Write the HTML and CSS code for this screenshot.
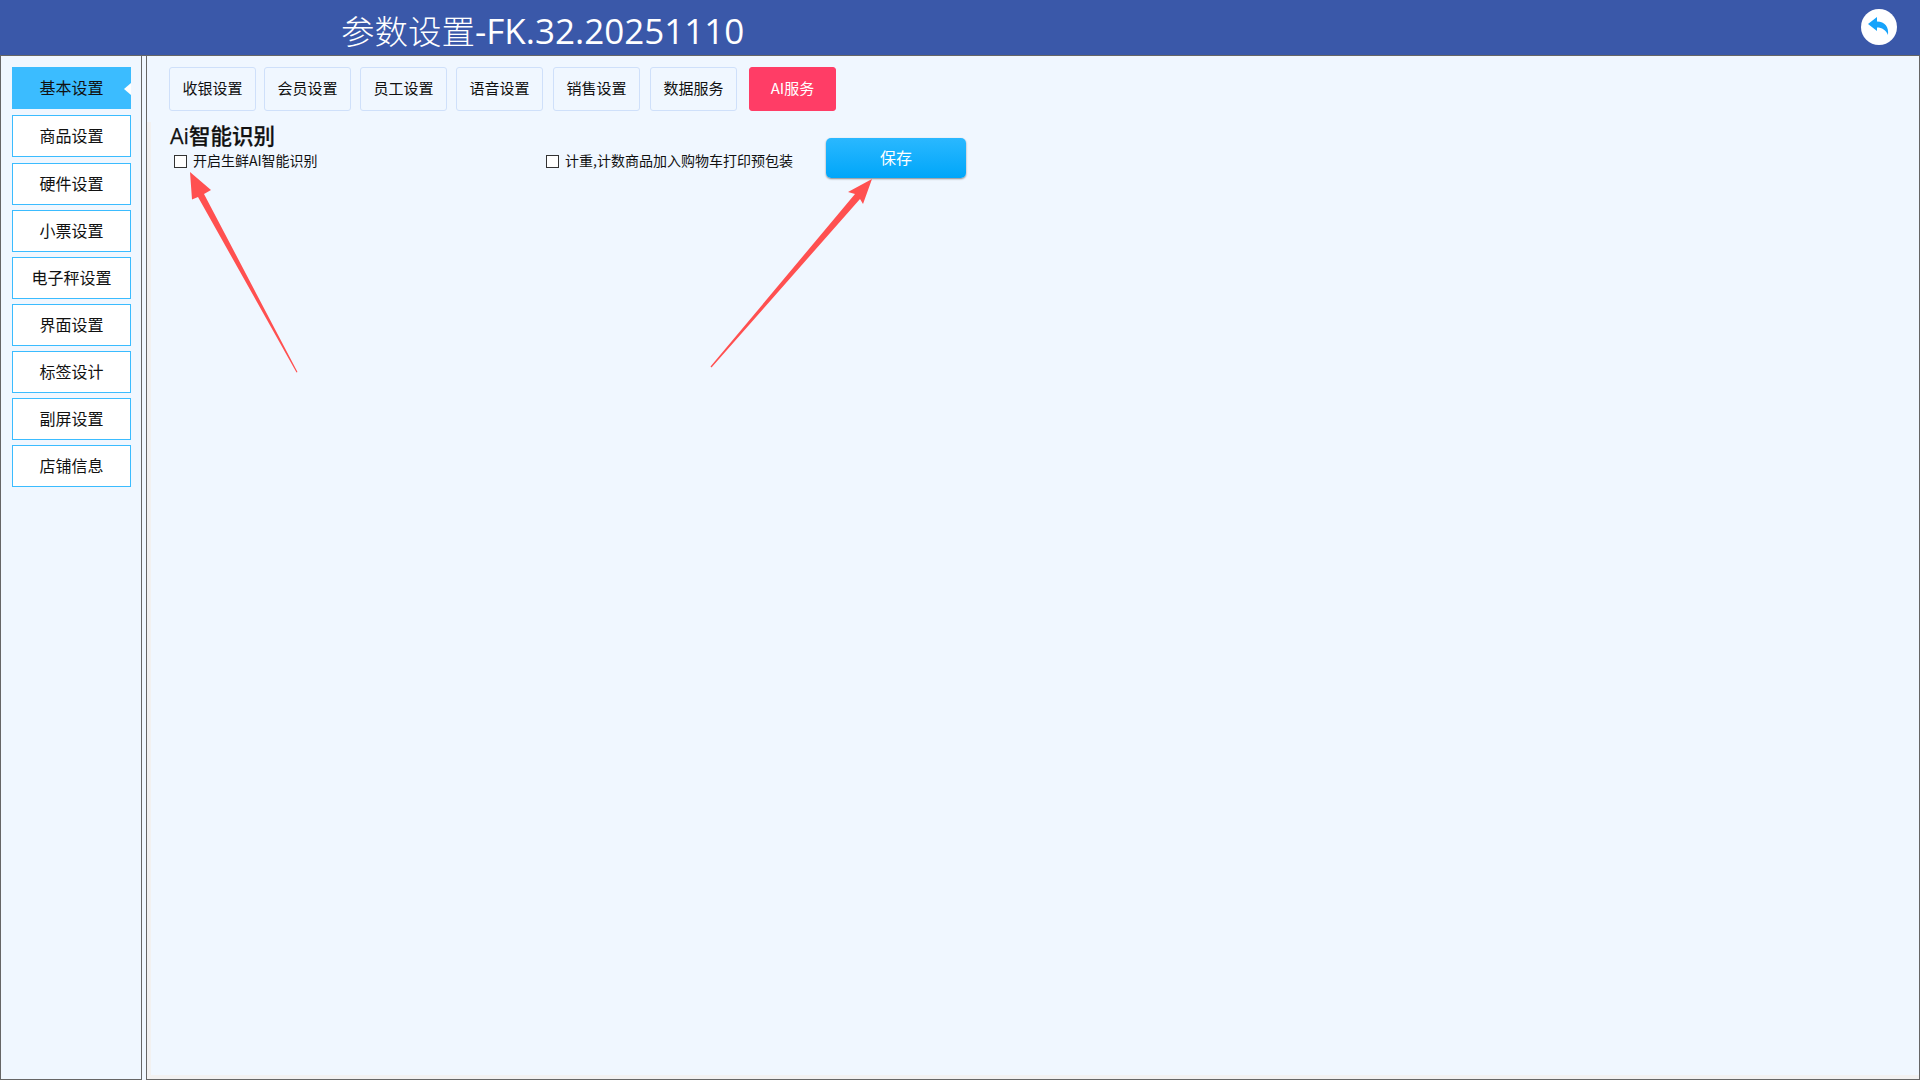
FILE: index.html
```html
<!DOCTYPE html>
<html lang="zh-CN">
<head>
<meta charset="utf-8">
<title>参数设置</title>
<link rel="stylesheet" href="styles.css">
</head>
<body>
<header class="topbar">
  <h1 class="title">参数设置<span class="version">-FK.32.20251110</span></h1>
  <button class="back" type="button" aria-label="返回">
    <svg class="back-icon" viewBox="0 0 36 36"><circle cx="18" cy="18" r="18" fill="#fff"/><path fill="#16a3fb" d="M7 15 L16 8 V12.5 C24 12.5 28 18 27 26 C25 21 21 18.5 16 18.5 V22 Z"/></svg>
  </button>
</header>
<div class="body">
  <nav class="side">
    <a class="side-item active">基本设置</a>
    <a class="side-item">商品设置</a>
    <a class="side-item">硬件设置</a>
    <a class="side-item">小票设置</a>
    <a class="side-item">电子秤设置</a>
    <a class="side-item">界面设置</a>
    <a class="side-item">标签设计</a>
    <a class="side-item">副屏设置</a>
    <a class="side-item">店铺信息</a>
  </nav>
  <main class="panel">
    <div class="tabs">
      <a class="tab">收银设置</a>
      <a class="tab">会员设置</a>
      <a class="tab">员工设置</a>
      <a class="tab">语音设置</a>
      <a class="tab">销售设置</a>
      <a class="tab">数据服务</a>
      <a class="tab tab-ai">AI服务</a>
    </div>
    <section class="section">
      <div class="col-main">
        <h2 class="heading">Ai智能识别</h2>
        <label class="check"><span class="box"></span>开启生鲜AI智能识别</label>
      </div>
      <div class="col-second">
        <label class="check"><span class="box"></span>计重,计数商品加入购物车打印预包装</label>
      </div>
      <button class="save" type="button">保存</button>
    </section>
  </main>
</div>
<svg class="annotations" viewBox="0 0 1920 1080" aria-hidden="true">
  <polygon fill="#ff5050" points="190,172 211,190 204,194 297.5,372 296.5,372.5 198,197 192,199.5"/>
  <polygon fill="#ff5050" points="872,179 863,204 860,199 711.5,367.5 710.5,366.5 855,194 848,192"/>
</svg>
</body>
</html>
```
FILE: styles.css
```css
* { box-sizing: border-box; }
html, body { margin: 0; height: 100%; }
body {
  display: flex;
  flex-direction: column;
  width: 1920px;
  height: 1080px;
  overflow: hidden;
  position: relative;
  background: #f0f7ff;
  color: #111;
  font-family: "Noto Sans CJK SC", "Noto Sans", sans-serif;
}
.topbar {
  flex: 0 0 56px;
  display: flex;
  align-items: flex-start;
  padding: 9px 23px 0 341px;
  background: #3a58a9;
  border-bottom: 1px solid #666;
}
.title {
  margin: 2px 0 0;
  font-family: "Open Sans", "Noto Sans CJK SC", sans-serif;
  font-size: 33.5px;
  line-height: 40px;
  font-weight: 300;
  color: #fff;
}
.version { font-size: 35px; font-weight: 400; }
.back {
  margin-left: auto;
  width: 36px;
  height: 36px;
  padding: 0;
  border: 0;
  background: none;
}
.back-icon { display: block; width: 36px; height: 36px; }
.body { flex: 1; display: flex; gap: 4px; min-height: 0; }
.side {
  flex: 0 0 142px;
  display: flex;
  flex-direction: column;
  gap: 5px;
  padding: 11px 10px 0 11px;
  border: 1px solid #666;
  border-top: 0;
}
.side-item {
  position: relative;
  display: flex;
  align-items: center;
  justify-content: center;
  flex: 0 0 42px;
  padding-bottom: 2px;
  background: #fff;
  border: 1px solid #3bbcff;
  font-size: 16px;
}
.side-item:nth-child(-n+2) { margin-bottom: 1px; }
.side-item.active { background: #3bbcff; }
.side-item.active::after {
  content: "";
  position: absolute;
  right: -1px;
  top: 15px;
  border-style: solid;
  border-width: 6px 7px 6px 0;
  border-color: transparent #fff transparent transparent;
}
.panel {
  flex: 1;
  display: flex;
  flex-direction: column;
  min-width: 0;
  border: 1px solid #666;
  border-top: 0;
}
.tabs {
  display: flex;
  gap: 9px;
  padding: 11px 0 11px 22px;
}
.tab {
  display: flex;
  align-items: center;
  justify-content: center;
  width: 87px;
  height: 44px;
  padding-bottom: 4px;
  border: 1px solid #cfe0fa;
  border-radius: 3px;
  font-size: 15px;
}
.tab:nth-child(2) { margin-left: -1px; }
.tab:nth-child(5), .tab:nth-child(6) { margin-left: 1px; }
.tab-ai {
  margin-left: 3px;
  background: #ff3d66;
  border-color: #ff3d66;
  color: #fff;
}
.section {
  flex: 1;
  display: flex;
  align-items: flex-start;
  padding-left: 19px;
  border-left: 4px solid #f2f1f1;
  border-bottom: 4px solid #f2f1f1;
}
.col-main { width: 376px; }
.heading {
  margin: 0;
  font-family: "Open Sans", "Noto Sans CJK SC", sans-serif;
  font-size: 21.5px;
  line-height: 28px;
  font-weight: 500;
  -webkit-text-stroke: .25px #111;
}
.col-main .check { margin: 0 0 0 4px; }
.col-second { width: 280px; padding-top: 28px; }
.check {
  display: flex;
  align-items: center;
  gap: 6px;
  height: 20px;
  font-size: 14px;
}
.box {
  flex: 0 0 13px;
  height: 13px;
  margin-top: 3px;
  background: #fff;
  border: 1px solid #333;
}
.save {
  width: 140px;
  height: 40px;
  margin-top: 16px;
  padding: 0 0 3px;
  border: 0;
  border-radius: 5px;
  background: linear-gradient(#2ab8ff, #00a6f9);
  box-shadow: 0 1px 2px rgba(0,0,0,.45);
  color: #fff;
  font: inherit;
  font-size: 16px;
}
.annotations {
  position: absolute;
  left: 0;
  top: 0;
  width: 1920px;
  height: 1080px;
  pointer-events: none;
}
```
